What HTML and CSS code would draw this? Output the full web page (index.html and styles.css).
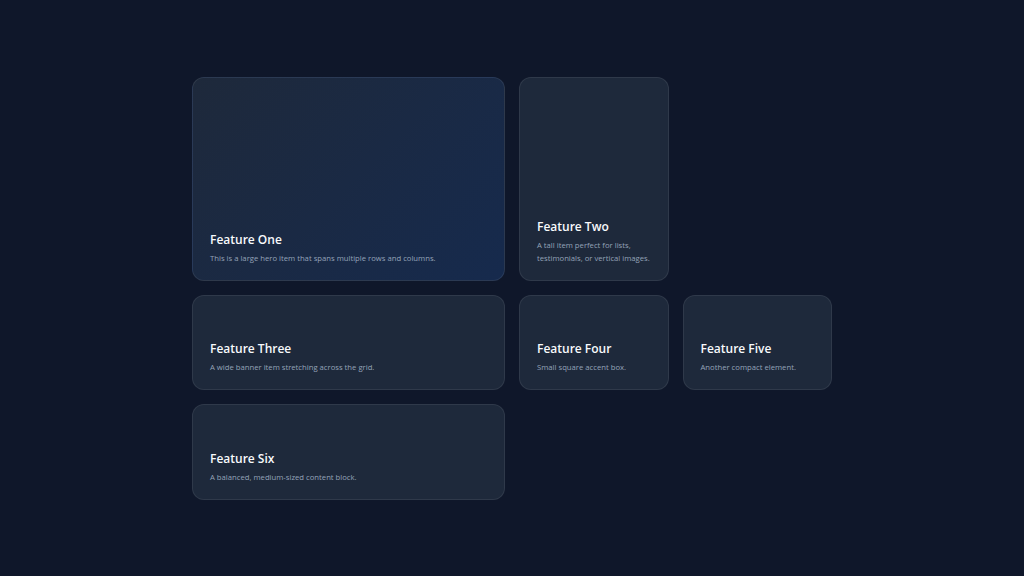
FILE: index.html
```html
<!DOCTYPE html>
<html lang="en">
<head>
<meta charset="utf-8">
<title>Bento Grid</title>
<link rel="stylesheet" href="styles.css">
</head>
<body>
<main class="page">
  <section class="bento">
    <article class="card hero">
      <h3 class="card-title">Feature One</h3>
      <p class="card-text">This is a large hero item that spans multiple rows and columns.</p>
    </article>
    <article class="card tall">
      <h3 class="card-title">Feature Two</h3>
      <p class="card-text">A tall item perfect for lists, testimonials, or vertical images.</p>
    </article>
    <article class="card wide">
      <h3 class="card-title">Feature Three</h3>
      <p class="card-text">A wide banner item stretching across the grid.</p>
    </article>
    <article class="card">
      <h3 class="card-title">Feature Four</h3>
      <p class="card-text">Small square accent box.</p>
    </article>
    <article class="card">
      <h3 class="card-title">Feature Five</h3>
      <p class="card-text">Another compact element.</p>
    </article>
    <article class="card wide">
      <h3 class="card-title">Feature Six</h3>
      <p class="card-text">A balanced, medium-sized content block.</p>
    </article>
  </section>
</main>
</body>
</html>
```
FILE: styles.css
```css
* { box-sizing: border-box; }
html, body { margin: 0; padding: 0; }
body {
  background: #0f172a;
  font-family: "Open Sans", "Noto Sans", sans-serif;
  color: #f1f5f9;
  width: 1024px;
  height: 576px;
  overflow: hidden;
}
.page {
  height: 576px;
  display: flex;
  align-items: center;
  justify-content: center;
}
.bento {
  width: 640px;
  display: grid;
  grid-template-columns: repeat(4, 1fr);
  grid-auto-rows: 95.25px;
  gap: 14px;
}
.card {
  background: #1e293b;
  border: 1px solid rgba(255, 255, 255, 0.08);
  border-radius: 12px;
  padding: 17px 17px 15px;
  display: flex;
  flex-direction: column;
  justify-content: flex-end;
}
.hero {
  grid-column: span 2;
  grid-row: span 2;
  background: linear-gradient(135deg, #1e293b 0%, #162a4d 100%);
}
.tall { grid-row: span 2; }
.wide { grid-column: span 2; }
.card-title {
  margin: 0 0 4px;
  font-size: 12px;
  font-weight: 600;
  color: #f8fafc;
  line-height: 16px;
}
.card-text {
  margin: 0;
  font-size: 7.7px;
  line-height: 13px;
  color: #94a3b8;
}
```
